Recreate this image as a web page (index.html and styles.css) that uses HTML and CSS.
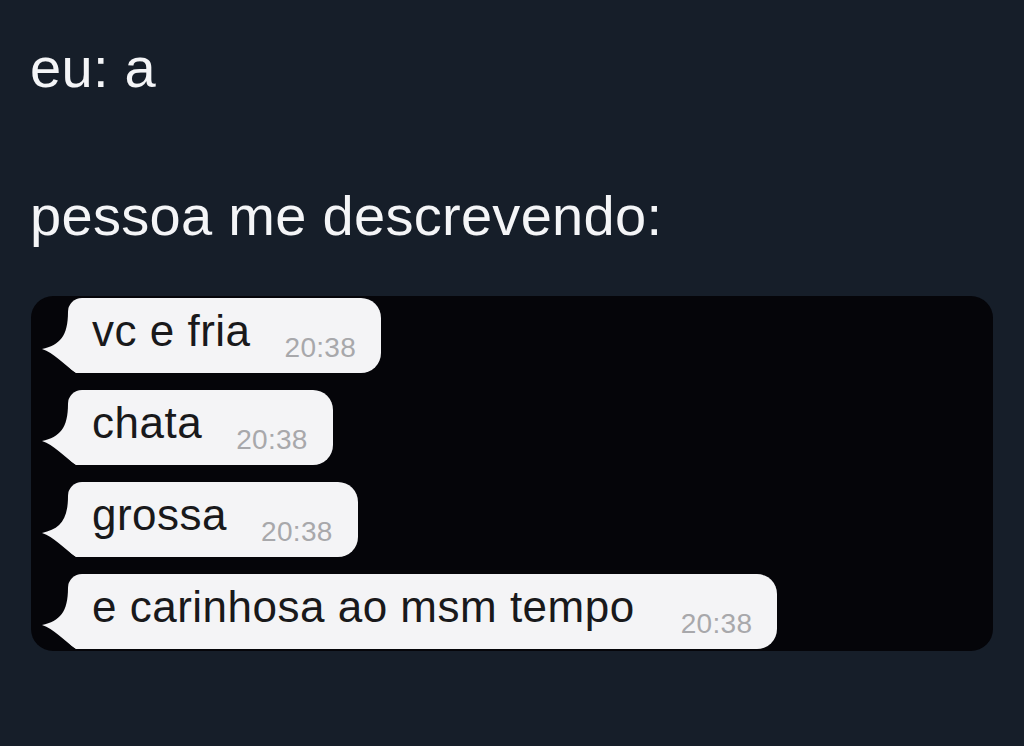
FILE: index.html
```html
<!DOCTYPE html>
<html lang="pt">
<head>
<meta charset="utf-8">
<title>eu: a</title>
<link rel="stylesheet" href="styles.css">
</head>
<body>
  <p class="line line-first">eu: a</p>
  <p class="line line-second">pessoa me descrevendo:</p>
  <div class="chat">
    <div class="msg">
      <svg class="tail" width="40" height="75" viewBox="0 0 40 75"><path d="M28 14 C28 38 20 47 2 51 C14 55 22 65 36 75 L40 75 L40 14 Z" fill="#f4f4f6"/></svg>
      <div class="bubble"><span class="text">vc e fria</span><span class="time">20:38</span></div>
    </div>
    <div class="msg">
      <svg class="tail" width="40" height="75" viewBox="0 0 40 75"><path d="M28 14 C28 38 20 47 2 51 C14 55 22 65 36 75 L40 75 L40 14 Z" fill="#f4f4f6"/></svg>
      <div class="bubble"><span class="text">chata</span><span class="time">20:38</span></div>
    </div>
    <div class="msg">
      <svg class="tail" width="40" height="75" viewBox="0 0 40 75"><path d="M28 14 C28 38 20 47 2 51 C14 55 22 65 36 75 L40 75 L40 14 Z" fill="#f4f4f6"/></svg>
      <div class="bubble"><span class="text">grossa</span><span class="time">20:38</span></div>
    </div>
    <div class="msg">
      <svg class="tail" width="40" height="75" viewBox="0 0 40 75"><path d="M28 14 C28 38 20 47 2 51 C14 55 22 65 36 75 L40 75 L40 14 Z" fill="#f4f4f6"/></svg>
      <div class="bubble"><span class="text">e carinhosa ao msm tempo</span><span class="time time-wide">20:38</span></div>
    </div>
  </div>
</body>
</html>
```
FILE: styles.css
```css
html, body {
  margin: 0;
  padding: 0;
  background: #161e29;
}

body {
  width: 1024px;
  height: 746px;
  overflow: hidden;
  padding-top: 40px;
  box-sizing: border-box;
  font-family: "Liberation Sans", Arial, sans-serif;
}

.line {
  margin: 0 0 0 30px;
  font-size: 56px;
  line-height: 56px;
  letter-spacing: 0.3px;
  color: #f4f5f7;
}

.line-second {
  margin-top: 92px;
}

.chat {
  margin: 52px 0 0 31px;
  width: 962px;
  height: 355px;
  box-sizing: border-box;
  padding: 2px 9px;
  background: #050509;
  border-radius: 22px;
  display: flex;
  flex-direction: column;
  align-items: flex-start;
  gap: 17px;
}

.msg {
  display: flex;
  align-items: stretch;
  height: 75px;
}

.tail {
  display: block;
  flex: none;
  margin-right: -12px;
  position: relative;
  z-index: 1;
}

.bubble {
  display: flex;
  align-items: flex-end;
  height: 75px;
  box-sizing: border-box;
  padding: 0 25px 0 24px;
  background: #f4f4f6;
  border-radius: 14px 20px 20px 12px;
}

.text {
  font-size: 44px;
  line-height: 44px;
  letter-spacing: 0.5px;
  margin-bottom: 20px;
  color: #19191b;
}

.time {
  font-size: 28px;
  line-height: 28px;
  letter-spacing: 0.3px;
  margin-left: 34px;
  margin-bottom: 11px;
  color: #a8a8ab;
}

.time-wide {
  margin-left: 46px;
}
```
